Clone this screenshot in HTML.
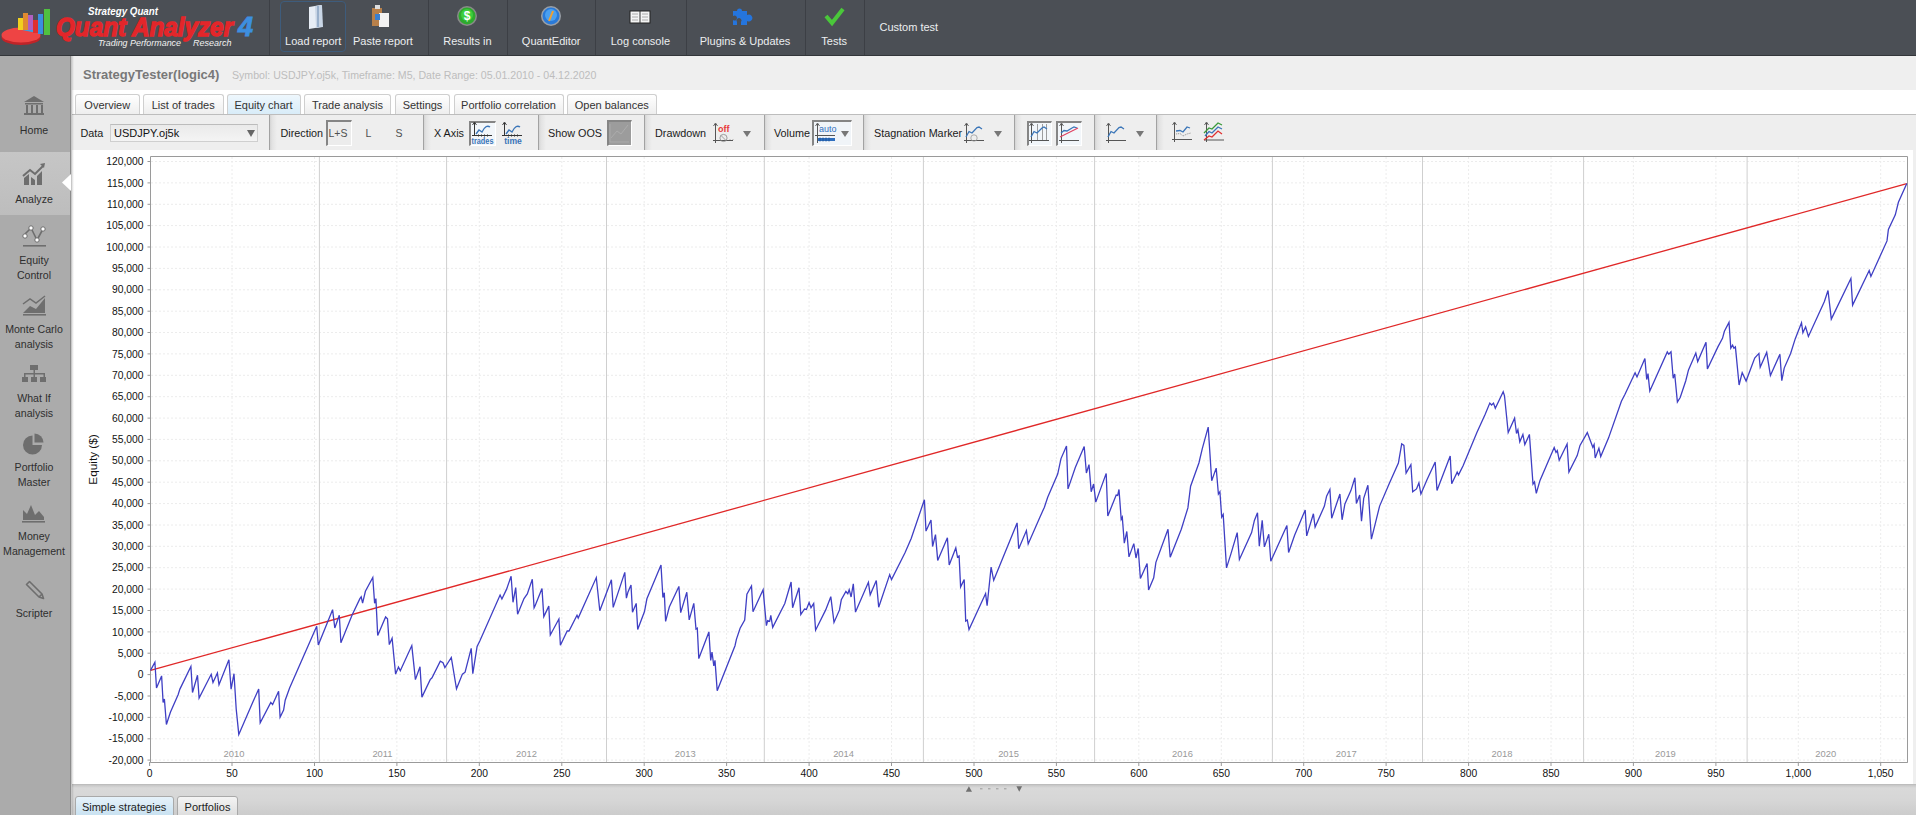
<!DOCTYPE html><html><head><meta charset="utf-8"><style>
*{margin:0;padding:0;box-sizing:border-box}
html,body{width:1916px;height:815px;overflow:hidden;background:#efefef;font-family:"Liberation Sans", sans-serif}
.abs{position:absolute}
#hdr{position:absolute;left:0;top:0;width:1916px;height:56px;background:#4b4f55;border-bottom:1px solid #33363a}
.hsep{position:absolute;top:0;width:1px;height:55px;background:#3c3f45}
.hlbl{position:absolute;top:34px;color:#eceef0;font-size:11px;white-space:nowrap;transform:translateX(-50%);line-height:14px}
#side{position:absolute;left:0;top:56px;width:71px;height:759px;background:#ababab;border-right:1.5px solid #8c8c8c}
#sshadow{position:absolute;left:71px;top:56px;width:3px;height:759px;background:linear-gradient(90deg,rgba(0,0,0,0.2),rgba(0,0,0,0));z-index:5}
.slbl{position:absolute;left:0;width:68px;text-align:center;color:#2e2e2e;font-size:10.6px;line-height:15px}
#title{position:absolute;left:83px;top:66.8px;font-size:13px;font-weight:bold;color:#787878;white-space:nowrap;line-height:16px}
#sub{position:absolute;left:232px;top:69px;font-size:10.6px;color:#bdbdbd;white-space:nowrap;line-height:12px}
#tabstrip{position:absolute;left:72px;top:90px;width:1844px;height:24px;background:#fff}
.tab{position:absolute;top:94px;height:20px;border:1px solid #cfcfcf;border-bottom:none;border-radius:3px 3px 0 0;background:linear-gradient(#ffffff,#eeeeee);font-size:11px;color:#333;line-height:21px;text-align:center;white-space:nowrap}
#tbar{position:absolute;left:72px;top:114px;width:1844px;height:36px;background:#eeeeee;border-top:1px solid #bdbdbd}
.tsep{position:absolute;top:115px;width:8px;height:35px;background:linear-gradient(90deg,#a2a2a2 0,#a2a2a2 1px,#d4d4d4 1px,#e2e2e2 3px,#eeeeee 8px)}
.tl{position:absolute;top:126px;font-size:10.8px;color:#1a1a1a;white-space:nowrap;line-height:14px}
#chart{position:absolute;left:72px;top:150px;width:1841px;height:634px;background:#fff}
#bbar{position:absolute;left:72px;top:783.5px;width:1844px;height:32px;background:linear-gradient(#c6c6c6 0,#d9d9d9 3px,#d6d6d6 50%,#cbcbcb 100%);border-top:1px solid #bdbdbd}
.btab{position:absolute;top:795.5px;height:22px;border:1px solid #a9a9a9;border-radius:3px 3px 0 0;font-size:11px;color:#222;line-height:20px;text-align:center;white-space:nowrap}
</style></head><body>
<div id="hdr"></div>
<svg class="abs" style="left:0;top:0" width="270" height="56" viewBox="0 0 270 56">
<ellipse cx="21" cy="37.5" rx="19.5" ry="7.5" fill="#c02428"/>
<ellipse cx="21" cy="35" rx="19.5" ry="7.5" fill="#ee4444"/><path d="M22 30 L40 29 L42 34 Z" fill="#3a9ee0"/><path d="M24 29 L38 28 L34 26 Z" fill="#50c040"/>
<rect x="18" y="18" width="5" height="12" fill="#f0d020"/>
<rect x="23" y="13" width="5" height="17" fill="#e08a30"/>
<rect x="28" y="15" width="5" height="15" fill="#b060c0"/>
<rect x="33" y="20" width="5" height="13" fill="#e03030"/>
<rect x="38" y="14" width="5" height="20" fill="#3a8ee0"/>
<rect x="44" y="9" width="6" height="26" fill="#50c040"/>
<text x="88" y="14.5" font-family="Liberation Sans" font-weight="bold" font-style="italic" font-size="10.5" fill="#ffffff" textLength="70" lengthAdjust="spacingAndGlyphs">Strategy Quant</text>
<text x="56" y="36" font-family="Liberation Sans" font-weight="bold" font-style="italic" font-size="25" fill="#e3262a" stroke="#e3262a" stroke-width="1.3" textLength="177" lengthAdjust="spacingAndGlyphs">Quant Analyzer</text>
<text x="238" y="35.5" font-family="Liberation Sans" font-weight="bold" font-style="italic" font-size="27" fill="#3d8fe0" stroke="#3d8fe0" stroke-width="0.8">4</text>
<text x="98" y="46" font-family="Liberation Sans" font-style="italic" font-size="9" fill="#f2f2f2" textLength="83" lengthAdjust="spacingAndGlyphs">Trading Performance</text>
<text x="193" y="46" font-family="Liberation Sans" font-style="italic" font-size="9" fill="#f2f2f2">Research</text>
</svg>
<div class="hsep" style="left:269.0px"></div>
<div class="hsep" style="left:428.0px"></div>
<div class="hsep" style="left:507.0px"></div>
<div class="hsep" style="left:595.0px"></div>
<div class="hsep" style="left:686.0px"></div>
<div class="hsep" style="left:805.0px"></div>
<div class="hsep" style="left:864.0px"></div>
<div class="abs" style="left:280px;top:1px;width:66px;height:51px;border:1px solid #3e5c7c;border-radius:4px;background:#474c53"></div>
<div class="hlbl" style="left:313.2px">Load report</div>
<div class="hlbl" style="left:382.9px">Paste report</div>
<div class="hlbl" style="left:467.4px">Results in</div>
<div class="hlbl" style="left:551.2px">QuantEditor</div>
<div class="hlbl" style="left:640.4px">Log console</div>
<div class="hlbl" style="left:745px">Plugins &amp; Updates</div>
<div class="hlbl" style="left:834.2px">Tests</div>
<div class="hlbl" style="left:908.8px;top:20px">Custom test</div>
<svg class="abs" style="left:280px;top:0" width="600" height="34" viewBox="280 0 600 34">
<path d="M309 7 L321 5 L321 27 L309 29 Z" fill="#e8eef6"/><path d="M315 6 L322 5 L323 27 L316 28 Z" fill="#c9d6e6"/><path d="M318 6 L318 27" stroke="#6a8ab0" stroke-width="1"/>
<rect x="372" y="8" width="10" height="18" fill="#b8804a"/><rect x="375" y="5" width="5" height="4" fill="#ddd"/><rect x="379" y="13" width="10" height="14" fill="#f2f2f2"/><rect x="375" y="14" width="5" height="6" fill="#3a7fd0"/>
<circle cx="467" cy="16" r="10" fill="#8a8a8a"/><circle cx="467" cy="16" r="8.5" fill="#2eaa2e"/><circle cx="467" cy="15" r="6" fill="#3ccf3c"/><text x="467" y="20" text-anchor="middle" font-family="Liberation Sans" font-weight="bold" font-size="12" fill="#fff">$</text>
<circle cx="551" cy="16" r="10" fill="#9aa0a8"/><circle cx="551" cy="16" r="8.5" fill="#2a7ad8"/><circle cx="551" cy="15" r="6" fill="#4aa0f0"/><path d="M549 21 L553 11" stroke="#f0a030" stroke-width="2"/>
<rect x="630" y="11" width="20" height="12" fill="#f4f4f4" stroke="#222" stroke-width="1"/><path d="M640 11 V23" stroke="#333"/><path d="M632 14h6M632 17h6M632 20h6M642 14h6M642 17h6M642 20h6" stroke="#999" stroke-width="0.8"/>
<path d="M733 11 h4 a2.5 2.5 0 1 1 5 0 h5 v4 a3.5 3.5 0 1 1 0 6 v4 h-6 v-3 a2.5 2.5 0 1 0 -4 0 v3 h-4 v-5 a2.5 2.5 0 1 0 0 -4 z" fill="#2575dd"/>
<path d="M826 16 L832 23 L843 9" stroke="#4ac73a" stroke-width="4" fill="none"/>
</svg>
<div id="side"></div>
<div class="abs" style="left:0;top:152px;width:69.5px;height:63px;background:linear-gradient(#c6c6c6,#bdbdbd)"></div>
<svg class="abs" style="left:62px;top:174px" width="9" height="17"><path d="M9 0 L0 8.5 L9 17 Z" fill="#ffffff"/></svg>
<div class="slbl" style="top:122.5px">Home</div>
<div class="slbl" style="top:191.5px">Analyze</div>
<div class="slbl" style="top:252.5px">Equity</div>
<div class="slbl" style="top:267.5px">Control</div>
<div class="slbl" style="top:321.5px">Monte Carlo</div>
<div class="slbl" style="top:336.5px">analysis</div>
<div class="slbl" style="top:390.5px">What If</div>
<div class="slbl" style="top:405.5px">analysis</div>
<div class="slbl" style="top:459.5px">Portfolio</div>
<div class="slbl" style="top:474.5px">Master</div>
<div class="slbl" style="top:528.5px">Money</div>
<div class="slbl" style="top:543.5px">Management</div>
<div class="slbl" style="top:605.5px">Scripter</div>
<svg class="abs" style="left:0;top:56px" width="68" height="560" viewBox="0 56 68 560">
<g fill="#6e6e6e" stroke="none">
<path d="M24 102 L34 96 L44 102 Z"/><rect x="25" y="103" width="18" height="1.5"/><rect x="26" y="105" width="2" height="8"/><rect x="31" y="105" width="2" height="8"/><rect x="36" y="105" width="2" height="8"/><rect x="41" y="105" width="2" height="8"/><rect x="24" y="113" width="20" height="2"/>
<path d="M24 185 L24 178 L29 174 L29 185 Z M31 185 L31 177 L35 180 L35 185 Z M37 185 L37 176 L42 171 L42 185 Z"/><path d="M23 176 L30 170 L35 174 L43 166" stroke="#6e6e6e" stroke-width="2" fill="none"/><path d="M40 164 L45 163 L44 168 Z"/>
<path d="M25 234 L31 228 L37 240 L43 229" stroke="#6e6e6e" stroke-width="1.6" fill="none"/><circle cx="25" cy="236" r="2.2" fill="#fff" stroke="#6e6e6e"/><circle cx="31" cy="228" r="2.2" fill="#fff" stroke="#6e6e6e"/><circle cx="37" cy="240" r="2.2" fill="#fff" stroke="#6e6e6e"/><circle cx="43" cy="229" r="2.2" fill="#fff" stroke="#6e6e6e"/><rect x="23" y="245" width="23" height="1.6"/>
<path d="M23 313 L30 306 L36 309 L45 298 L45 313 Z"/><path d="M23 304 L30 299 L36 303 L45 296" stroke="#6e6e6e" stroke-width="1.5" fill="none"/><rect x="23" y="314" width="23" height="1.6"/>
<rect x="30" y="365" width="8" height="5"/><rect x="33.5" y="370" width="1.5" height="4"/><rect x="24" y="373" width="21" height="1.5"/><rect x="24" y="373" width="1.5" height="4"/><rect x="33.5" y="373" width="1.5" height="4"/><rect x="43.5" y="373" width="1.5" height="4"/><rect x="22" y="377" width="6" height="5"/><rect x="31" y="377" width="6" height="5"/><rect x="40" y="377" width="6" height="5"/>
<path d="M32.5 435.5 A9.5 9.5 0 1 0 42 445 L32.5 445 Z"/><path d="M34.5 433.5 A9 9 0 0 1 43.5 442.5 L34.5 442.5 Z"/>
<path d="M23 520 L23 510 L27 514 L31 505 L35 515 L39 511 L44 517 L44 520 Z"/><rect x="22" y="521" width="23" height="1.6"/>
<path d="M29.5 581.5 L42 594 L43.5 598.5 L39 597 L26.5 584.5 Z M39 597 L42 594" fill="none" stroke="#6e6e6e" stroke-width="1.6" stroke-linejoin="round"/>
</g></svg>
<div id="title">StrategyTester(logic4)</div>
<div id="sub">Symbol: USDJPY.oj5k, Timeframe: M5, Date Range: 05.01.2010 - 04.12.2020</div>
<div id="tabstrip"></div>
<div class="tab" style="left:74.5px;width:65.5px;">Overview</div>
<div class="tab" style="left:142.5px;width:81.5px;">List of trades</div>
<div class="tab" style="left:226.5px;width:74.0px;background:linear-gradient(#eef7fd,#d8ecf8);">Equity chart</div>
<div class="tab" style="left:304px;width:87px;">Trade analysis</div>
<div class="tab" style="left:395px;width:55px;">Settings</div>
<div class="tab" style="left:453.5px;width:110.0px;">Portfolio correlation</div>
<div class="tab" style="left:567px;width:89.5px;">Open balances</div>
<div id="tbar"></div>
<div class="tsep" style="left:269px"></div>
<div class="tsep" style="left:423.2px"></div>
<div class="tsep" style="left:537.5px"></div>
<div class="tsep" style="left:644px"></div>
<div class="tsep" style="left:763.5px"></div>
<div class="tsep" style="left:863px"></div>
<div class="tsep" style="left:1014.3px"></div>
<div class="tsep" style="left:1094.2px"></div>
<div class="tsep" style="left:1156.2px"></div>
<div class="tl" style="left:80.5px">Data</div>
<div class="tl" style="left:280.5px">Direction</div>
<div class="tl" style="left:434px">X Axis</div>
<div class="tl" style="left:548px">Show OOS</div>
<div class="tl" style="left:655px">Drawdown</div>
<div class="tl" style="left:774px">Volume</div>
<div class="tl" style="left:874px">Stagnation Marker</div>
<div class="abs" style="left:110px;top:124px;width:148px;height:18px;border:1px solid #cfcfcf;border-top-color:#bcbcbc;background:linear-gradient(#eaeaea,#f4f4f4);font-size:11px;line-height:16px;padding-left:3px;color:#111">USDJPY.oj5k</div>
<div class="abs" style="left:247px;top:130px;width:0;height:0;border-left:4px solid transparent;border-right:4px solid transparent;border-top:7px solid #666"></div>
<div class="abs" style="left:325.6px;top:120.4px;width:26px;height:26px;border-top:2px solid #858585;border-left:2px solid #858585;border-right:1px solid #fff;border-bottom:1px solid #fff;background:#ececec"></div>
<div class="tl" style="left:328.5px;color:#505050;font-size:10.5px">L+S</div>
<div class="tl" style="left:365.5px;color:#505050;font-size:10.5px">L</div>
<div class="tl" style="left:395.5px;color:#505050;font-size:10.5px">S</div>
<div class="abs" style="left:469.4px;top:120.6px;width:26.5px;height:25px;border-top:2px solid #858585;border-left:2px solid #858585;border-right:1px solid #fff;border-bottom:1px solid #fff;background:#f2f6fa"></div>
<div class="abs" style="left:606.6px;top:120.2px;width:25.5px;height:25.5px;border-top:2px solid #858585;border-left:2px solid #858585;border-right:1px solid #fff;border-bottom:1px solid #fff;background:#9c9c9c"></div>
<div class="abs" style="left:811.8px;top:119.7px;width:40.5px;height:26.3px;border-top:2px solid #858585;border-left:2px solid #858585;border-right:1px solid #fff;border-bottom:1px solid #fff;background:#f0f4f8"></div>
<div class="abs" style="left:1026.6px;top:120.6px;width:25.8px;height:25px;border-top:2px solid #858585;border-left:2px solid #858585;border-right:1px solid #fff;border-bottom:1px solid #fff;background:#f2f6fa"></div>
<div class="abs" style="left:1056.2px;top:120.6px;width:26.3px;height:25px;border-top:2px solid #858585;border-left:2px solid #858585;border-right:1px solid #fff;border-bottom:1px solid #fff;background:#f2f6fa"></div>
<svg class="abs" style="left:460px;top:115px" width="800" height="35" viewBox="460 115 800 35">
<g fill="none" stroke-width="1.2">
<path d="M474.5 123 V136 M472 135.5 H492" stroke="#333" stroke-width="1"/><path d="M472.5 125 L474.5 122 L476.5 125" stroke="#333" stroke-width="0.9"/><path d="M476 134 L479 130 L482 132 Q486 124 490 127" stroke="#3a75b8" stroke-width="1.4"/><path d="M478 135.5h1M481 135.5h1M484 135.5h1M487 135.5h1" stroke="#333" stroke-width="2"/><text x="482.5" y="143.5" font-family="Liberation Sans" font-size="8.6" font-weight="bold" fill="#3a75b8" stroke="none" text-anchor="middle" textLength="22" lengthAdjust="spacingAndGlyphs">trades</text>
<path d="M504.5 123 V136 M502 135.5 H522" stroke="#333" stroke-width="1"/><path d="M502.5 125 L504.5 122 L506.5 125" stroke="#333" stroke-width="0.9"/><path d="M506 134 L509 130 L512 132 Q516 124 520 127" stroke="#3a75b8" stroke-width="1.4"/><path d="M508 135.5h1M511 135.5h1M514 135.5h1M517 135.5h1" stroke="#333" stroke-width="2"/><text x="513" y="143.5" font-family="Liberation Sans" font-size="8.6" font-weight="bold" fill="#3a75b8" stroke="none" text-anchor="middle">time</text>
<path d="M610 124 V142 H629 M611 138 L617 131 L621 134 L628 125" stroke="#b0b0b0" stroke-width="0.8"/>
<path d="M715.5 124 V143 M713 140.5 H733" stroke="#555" stroke-width="1"/><path d="M713.5 126 L715.5 123 L717.5 126" stroke="#555" stroke-width="0.9"/><text x="718" y="131.5" font-family="Liberation Sans" font-size="9" font-weight="bold" fill="#e83a3a" stroke="none">off</text><circle cx="723.5" cy="138" r="3.6" stroke="#888" stroke-width="0.8"/><path d="M721 135.5 L726 140.5" stroke="#888" stroke-width="0.8"/><path d="M730 139.5 L731.5 141 L733 139.5" stroke="#555" stroke-width="0.8"/>
<path d="M743 131 H751 L747 137 Z" fill="#777" stroke="none"/>
<path d="M817.5 124 V143 M815 135.5 H835" stroke="#555" stroke-width="1"/><path d="M815.5 126 L817.5 123 L819.5 126" stroke="#555" stroke-width="0.9"/><text x="819" y="131.5" font-family="Liberation Sans" font-size="9" fill="#2f6fbf" stroke="none">auto</text><path d="M818 139.5 H835" stroke="#2f6fbf" stroke-width="3"/><path d="M820 137.5v4M823 137.5v4M826 137.5v4M829 137.5v4" stroke="#1a4f8f" stroke-width="0.8"/>
<path d="M841 131 H849 L845 137 Z" fill="#777" stroke="none"/>
<path d="M966.5 124 V143 M964 140.5 H984" stroke="#555" stroke-width="1"/><path d="M964.5 126 L966.5 123 L968.5 126" stroke="#555" stroke-width="0.9"/><path d="M966 137 L969 131.5 L972 133 L977 127.5 L979 127 L982 129" stroke="#3a75b8" stroke-width="1.3"/><circle cx="974" cy="138" r="3.2" stroke="#999" stroke-width="0.8"/>
<path d="M994 131 H1002 L998 137 Z" fill="#777" stroke="none"/>
<path d="M1031.5 124 V143 M1029 140.5 H1049" stroke="#555" stroke-width="1"/><path d="M1029.5 126 L1031.5 123 L1033.5 126" stroke="#555" stroke-width="0.9"/><path d="M1037.5 124 V140 M1042.5 124 V140 M1046.5 124 V140" stroke="#777" stroke-width="0.7"/><path d="M1031 137 L1034 131.5 L1037 133 L1042 128 L1044 127 L1047 129" stroke="#3a75b8" stroke-width="1.3"/>
<path d="M1061.5 124 V143 M1059 140.5 H1079" stroke="#555" stroke-width="1"/><path d="M1059.5 126 L1061.5 123 L1063.5 126" stroke="#555" stroke-width="0.9"/><path d="M1061 133 L1064 130.5 L1067 131 L1072 128 L1074 127 L1077 128" stroke="#3a75b8" stroke-width="1.3"/><path d="M1060 137 L1078 128" stroke="#e04060" stroke-width="1.1"/>
<path d="M1108.5 124 V143 M1106 140.5 H1126" stroke="#555" stroke-width="1"/><path d="M1106.5 126 L1108.5 123 L1110.5 126" stroke="#555" stroke-width="0.9"/><path d="M1108 137 L1111 131.5 L1114 133 L1119 127.5 L1121 127 L1124 129" stroke="#3a75b8" stroke-width="1.3"/>
<path d="M1136 131 H1144 L1140 137 Z" fill="#777" stroke="none"/>
<path d="M1174.5 123 V142 M1172 139.5 H1192" stroke="#555" stroke-width="1"/><path d="M1172.5 125 L1174.5 122 L1176.5 125" stroke="#555" stroke-width="0.9"/><path d="M1176 131 L1180 130.5 L1183 132 L1187 127 L1190 128" stroke="#3a75b8" stroke-width="1.3"/><path d="M1176 134 L1180 133.5 L1183 136 L1187 134 L1191 133" stroke="#999" stroke-width="1" stroke-dasharray="1.2 0.8"/>
<path d="M1206.5 123 V142 M1204 140 H1224" stroke="#555" stroke-width="1"/><path d="M1204.5 125 L1206.5 122 L1208.5 125" stroke="#555" stroke-width="0.9"/><path d="M1204 133 L1209 128 L1212 129 L1218 123 L1222 125" stroke="#3a9a3a" stroke-width="1.3"/><path d="M1205 136 L1209 131.5 L1212 133 L1218 127 L1222 129" stroke="#3a75b8" stroke-width="1.3"/><path d="M1204 140 L1209 136 L1212 137 L1218 131 L1222 134" stroke="#e03030" stroke-width="1.3"/>
</g></svg>
<div id="chart"></div>
<svg class="abs" style="left:72px;top:150px" width="1841" height="634" viewBox="72 150 1841 634"><line x1="151" y1="161.5" x2="1907" y2="161.5" stroke="#ececec" stroke-width="1" stroke-dasharray="2 2"/><line x1="147.5" y1="161.5" x2="150.5" y2="161.5" stroke="#999"/><text x="143.5" y="165.1" text-anchor="end" font-family="Liberation Sans" font-size="10.3" fill="#111">120,000</text><line x1="151" y1="182.9" x2="1907" y2="182.9" stroke="#ececec" stroke-width="1" stroke-dasharray="2 2"/><line x1="147.5" y1="182.9" x2="150.5" y2="182.9" stroke="#999"/><text x="143.5" y="186.5" text-anchor="end" font-family="Liberation Sans" font-size="10.3" fill="#111">115,000</text><line x1="151" y1="204.3" x2="1907" y2="204.3" stroke="#ececec" stroke-width="1" stroke-dasharray="2 2"/><line x1="147.5" y1="204.3" x2="150.5" y2="204.3" stroke="#999"/><text x="143.5" y="207.9" text-anchor="end" font-family="Liberation Sans" font-size="10.3" fill="#111">110,000</text><line x1="151" y1="225.6" x2="1907" y2="225.6" stroke="#ececec" stroke-width="1" stroke-dasharray="2 2"/><line x1="147.5" y1="225.6" x2="150.5" y2="225.6" stroke="#999"/><text x="143.5" y="229.2" text-anchor="end" font-family="Liberation Sans" font-size="10.3" fill="#111">105,000</text><line x1="151" y1="247.0" x2="1907" y2="247.0" stroke="#ececec" stroke-width="1" stroke-dasharray="2 2"/><line x1="147.5" y1="247.0" x2="150.5" y2="247.0" stroke="#999"/><text x="143.5" y="250.6" text-anchor="end" font-family="Liberation Sans" font-size="10.3" fill="#111">100,000</text><line x1="151" y1="268.4" x2="1907" y2="268.4" stroke="#ececec" stroke-width="1" stroke-dasharray="2 2"/><line x1="147.5" y1="268.4" x2="150.5" y2="268.4" stroke="#999"/><text x="143.5" y="272.0" text-anchor="end" font-family="Liberation Sans" font-size="10.3" fill="#111">95,000</text><line x1="151" y1="289.8" x2="1907" y2="289.8" stroke="#ececec" stroke-width="1" stroke-dasharray="2 2"/><line x1="147.5" y1="289.8" x2="150.5" y2="289.8" stroke="#999"/><text x="143.5" y="293.4" text-anchor="end" font-family="Liberation Sans" font-size="10.3" fill="#111">90,000</text><line x1="151" y1="311.2" x2="1907" y2="311.2" stroke="#ececec" stroke-width="1" stroke-dasharray="2 2"/><line x1="147.5" y1="311.2" x2="150.5" y2="311.2" stroke="#999"/><text x="143.5" y="314.8" text-anchor="end" font-family="Liberation Sans" font-size="10.3" fill="#111">85,000</text><line x1="151" y1="332.5" x2="1907" y2="332.5" stroke="#ececec" stroke-width="1" stroke-dasharray="2 2"/><line x1="147.5" y1="332.5" x2="150.5" y2="332.5" stroke="#999"/><text x="143.5" y="336.1" text-anchor="end" font-family="Liberation Sans" font-size="10.3" fill="#111">80,000</text><line x1="151" y1="353.9" x2="1907" y2="353.9" stroke="#ececec" stroke-width="1" stroke-dasharray="2 2"/><line x1="147.5" y1="353.9" x2="150.5" y2="353.9" stroke="#999"/><text x="143.5" y="357.5" text-anchor="end" font-family="Liberation Sans" font-size="10.3" fill="#111">75,000</text><line x1="151" y1="375.3" x2="1907" y2="375.3" stroke="#ececec" stroke-width="1" stroke-dasharray="2 2"/><line x1="147.5" y1="375.3" x2="150.5" y2="375.3" stroke="#999"/><text x="143.5" y="378.9" text-anchor="end" font-family="Liberation Sans" font-size="10.3" fill="#111">70,000</text><line x1="151" y1="396.7" x2="1907" y2="396.7" stroke="#ececec" stroke-width="1" stroke-dasharray="2 2"/><line x1="147.5" y1="396.7" x2="150.5" y2="396.7" stroke="#999"/><text x="143.5" y="400.3" text-anchor="end" font-family="Liberation Sans" font-size="10.3" fill="#111">65,000</text><line x1="151" y1="418.1" x2="1907" y2="418.1" stroke="#ececec" stroke-width="1" stroke-dasharray="2 2"/><line x1="147.5" y1="418.1" x2="150.5" y2="418.1" stroke="#999"/><text x="143.5" y="421.7" text-anchor="end" font-family="Liberation Sans" font-size="10.3" fill="#111">60,000</text><line x1="151" y1="439.4" x2="1907" y2="439.4" stroke="#ececec" stroke-width="1" stroke-dasharray="2 2"/><line x1="147.5" y1="439.4" x2="150.5" y2="439.4" stroke="#999"/><text x="143.5" y="443.0" text-anchor="end" font-family="Liberation Sans" font-size="10.3" fill="#111">55,000</text><line x1="151" y1="460.8" x2="1907" y2="460.8" stroke="#ececec" stroke-width="1" stroke-dasharray="2 2"/><line x1="147.5" y1="460.8" x2="150.5" y2="460.8" stroke="#999"/><text x="143.5" y="464.4" text-anchor="end" font-family="Liberation Sans" font-size="10.3" fill="#111">50,000</text><line x1="151" y1="482.2" x2="1907" y2="482.2" stroke="#ececec" stroke-width="1" stroke-dasharray="2 2"/><line x1="147.5" y1="482.2" x2="150.5" y2="482.2" stroke="#999"/><text x="143.5" y="485.8" text-anchor="end" font-family="Liberation Sans" font-size="10.3" fill="#111">45,000</text><line x1="151" y1="503.6" x2="1907" y2="503.6" stroke="#ececec" stroke-width="1" stroke-dasharray="2 2"/><line x1="147.5" y1="503.6" x2="150.5" y2="503.6" stroke="#999"/><text x="143.5" y="507.2" text-anchor="end" font-family="Liberation Sans" font-size="10.3" fill="#111">40,000</text><line x1="151" y1="525.0" x2="1907" y2="525.0" stroke="#ececec" stroke-width="1" stroke-dasharray="2 2"/><line x1="147.5" y1="525.0" x2="150.5" y2="525.0" stroke="#999"/><text x="143.5" y="528.6" text-anchor="end" font-family="Liberation Sans" font-size="10.3" fill="#111">35,000</text><line x1="151" y1="546.3" x2="1907" y2="546.3" stroke="#ececec" stroke-width="1" stroke-dasharray="2 2"/><line x1="147.5" y1="546.3" x2="150.5" y2="546.3" stroke="#999"/><text x="143.5" y="549.9" text-anchor="end" font-family="Liberation Sans" font-size="10.3" fill="#111">30,000</text><line x1="151" y1="567.7" x2="1907" y2="567.7" stroke="#ececec" stroke-width="1" stroke-dasharray="2 2"/><line x1="147.5" y1="567.7" x2="150.5" y2="567.7" stroke="#999"/><text x="143.5" y="571.3" text-anchor="end" font-family="Liberation Sans" font-size="10.3" fill="#111">25,000</text><line x1="151" y1="589.1" x2="1907" y2="589.1" stroke="#ececec" stroke-width="1" stroke-dasharray="2 2"/><line x1="147.5" y1="589.1" x2="150.5" y2="589.1" stroke="#999"/><text x="143.5" y="592.7" text-anchor="end" font-family="Liberation Sans" font-size="10.3" fill="#111">20,000</text><line x1="151" y1="610.5" x2="1907" y2="610.5" stroke="#ececec" stroke-width="1" stroke-dasharray="2 2"/><line x1="147.5" y1="610.5" x2="150.5" y2="610.5" stroke="#999"/><text x="143.5" y="614.1" text-anchor="end" font-family="Liberation Sans" font-size="10.3" fill="#111">15,000</text><line x1="151" y1="631.9" x2="1907" y2="631.9" stroke="#ececec" stroke-width="1" stroke-dasharray="2 2"/><line x1="147.5" y1="631.9" x2="150.5" y2="631.9" stroke="#999"/><text x="143.5" y="635.5" text-anchor="end" font-family="Liberation Sans" font-size="10.3" fill="#111">10,000</text><line x1="151" y1="653.2" x2="1907" y2="653.2" stroke="#ececec" stroke-width="1" stroke-dasharray="2 2"/><line x1="147.5" y1="653.2" x2="150.5" y2="653.2" stroke="#999"/><text x="143.5" y="656.8" text-anchor="end" font-family="Liberation Sans" font-size="10.3" fill="#111">5,000</text><line x1="151" y1="674.6" x2="1907" y2="674.6" stroke="#ececec" stroke-width="1" stroke-dasharray="2 2"/><line x1="147.5" y1="674.6" x2="150.5" y2="674.6" stroke="#999"/><text x="143.5" y="678.2" text-anchor="end" font-family="Liberation Sans" font-size="10.3" fill="#111">0</text><line x1="151" y1="696.0" x2="1907" y2="696.0" stroke="#ececec" stroke-width="1" stroke-dasharray="2 2"/><line x1="147.5" y1="696.0" x2="150.5" y2="696.0" stroke="#999"/><text x="143.5" y="699.6" text-anchor="end" font-family="Liberation Sans" font-size="10.3" fill="#111">-5,000</text><line x1="151" y1="717.4" x2="1907" y2="717.4" stroke="#ececec" stroke-width="1" stroke-dasharray="2 2"/><line x1="147.5" y1="717.4" x2="150.5" y2="717.4" stroke="#999"/><text x="143.5" y="721.0" text-anchor="end" font-family="Liberation Sans" font-size="10.3" fill="#111">-10,000</text><line x1="151" y1="738.8" x2="1907" y2="738.8" stroke="#ececec" stroke-width="1" stroke-dasharray="2 2"/><line x1="147.5" y1="738.8" x2="150.5" y2="738.8" stroke="#999"/><text x="143.5" y="742.4" text-anchor="end" font-family="Liberation Sans" font-size="10.3" fill="#111">-15,000</text><line x1="151" y1="760.1" x2="1907" y2="760.1" stroke="#ececec" stroke-width="1" stroke-dasharray="2 2"/><line x1="147.5" y1="760.1" x2="150.5" y2="760.1" stroke="#999"/><text x="143.5" y="763.7" text-anchor="end" font-family="Liberation Sans" font-size="10.3" fill="#111">-20,000</text><line x1="149.6" y1="762" x2="149.6" y2="766" stroke="#999"/><text x="149.6" y="776.5" text-anchor="middle" font-family="Liberation Sans" font-size="10.3" fill="#111">0</text><line x1="232.0" y1="157" x2="232.0" y2="762" stroke="#ececec" stroke-width="1" stroke-dasharray="2 2"/><line x1="232.0" y1="762" x2="232.0" y2="766" stroke="#999"/><text x="232.0" y="776.5" text-anchor="middle" font-family="Liberation Sans" font-size="10.3" fill="#111">50</text><line x1="314.5" y1="157" x2="314.5" y2="762" stroke="#ececec" stroke-width="1" stroke-dasharray="2 2"/><line x1="314.5" y1="762" x2="314.5" y2="766" stroke="#999"/><text x="314.5" y="776.5" text-anchor="middle" font-family="Liberation Sans" font-size="10.3" fill="#111">100</text><line x1="396.9" y1="157" x2="396.9" y2="762" stroke="#ececec" stroke-width="1" stroke-dasharray="2 2"/><line x1="396.9" y1="762" x2="396.9" y2="766" stroke="#999"/><text x="396.9" y="776.5" text-anchor="middle" font-family="Liberation Sans" font-size="10.3" fill="#111">150</text><line x1="479.3" y1="157" x2="479.3" y2="762" stroke="#ececec" stroke-width="1" stroke-dasharray="2 2"/><line x1="479.3" y1="762" x2="479.3" y2="766" stroke="#999"/><text x="479.3" y="776.5" text-anchor="middle" font-family="Liberation Sans" font-size="10.3" fill="#111">200</text><line x1="561.8" y1="157" x2="561.8" y2="762" stroke="#ececec" stroke-width="1" stroke-dasharray="2 2"/><line x1="561.8" y1="762" x2="561.8" y2="766" stroke="#999"/><text x="561.8" y="776.5" text-anchor="middle" font-family="Liberation Sans" font-size="10.3" fill="#111">250</text><line x1="644.2" y1="157" x2="644.2" y2="762" stroke="#ececec" stroke-width="1" stroke-dasharray="2 2"/><line x1="644.2" y1="762" x2="644.2" y2="766" stroke="#999"/><text x="644.2" y="776.5" text-anchor="middle" font-family="Liberation Sans" font-size="10.3" fill="#111">300</text><line x1="726.6" y1="157" x2="726.6" y2="762" stroke="#ececec" stroke-width="1" stroke-dasharray="2 2"/><line x1="726.6" y1="762" x2="726.6" y2="766" stroke="#999"/><text x="726.6" y="776.5" text-anchor="middle" font-family="Liberation Sans" font-size="10.3" fill="#111">350</text><line x1="809.1" y1="157" x2="809.1" y2="762" stroke="#ececec" stroke-width="1" stroke-dasharray="2 2"/><line x1="809.1" y1="762" x2="809.1" y2="766" stroke="#999"/><text x="809.1" y="776.5" text-anchor="middle" font-family="Liberation Sans" font-size="10.3" fill="#111">400</text><line x1="891.5" y1="157" x2="891.5" y2="762" stroke="#ececec" stroke-width="1" stroke-dasharray="2 2"/><line x1="891.5" y1="762" x2="891.5" y2="766" stroke="#999"/><text x="891.5" y="776.5" text-anchor="middle" font-family="Liberation Sans" font-size="10.3" fill="#111">450</text><line x1="974.0" y1="157" x2="974.0" y2="762" stroke="#ececec" stroke-width="1" stroke-dasharray="2 2"/><line x1="974.0" y1="762" x2="974.0" y2="766" stroke="#999"/><text x="974.0" y="776.5" text-anchor="middle" font-family="Liberation Sans" font-size="10.3" fill="#111">500</text><line x1="1056.4" y1="157" x2="1056.4" y2="762" stroke="#ececec" stroke-width="1" stroke-dasharray="2 2"/><line x1="1056.4" y1="762" x2="1056.4" y2="766" stroke="#999"/><text x="1056.4" y="776.5" text-anchor="middle" font-family="Liberation Sans" font-size="10.3" fill="#111">550</text><line x1="1138.8" y1="157" x2="1138.8" y2="762" stroke="#ececec" stroke-width="1" stroke-dasharray="2 2"/><line x1="1138.8" y1="762" x2="1138.8" y2="766" stroke="#999"/><text x="1138.8" y="776.5" text-anchor="middle" font-family="Liberation Sans" font-size="10.3" fill="#111">600</text><line x1="1221.3" y1="157" x2="1221.3" y2="762" stroke="#ececec" stroke-width="1" stroke-dasharray="2 2"/><line x1="1221.3" y1="762" x2="1221.3" y2="766" stroke="#999"/><text x="1221.3" y="776.5" text-anchor="middle" font-family="Liberation Sans" font-size="10.3" fill="#111">650</text><line x1="1303.7" y1="157" x2="1303.7" y2="762" stroke="#ececec" stroke-width="1" stroke-dasharray="2 2"/><line x1="1303.7" y1="762" x2="1303.7" y2="766" stroke="#999"/><text x="1303.7" y="776.5" text-anchor="middle" font-family="Liberation Sans" font-size="10.3" fill="#111">700</text><line x1="1386.1" y1="157" x2="1386.1" y2="762" stroke="#ececec" stroke-width="1" stroke-dasharray="2 2"/><line x1="1386.1" y1="762" x2="1386.1" y2="766" stroke="#999"/><text x="1386.1" y="776.5" text-anchor="middle" font-family="Liberation Sans" font-size="10.3" fill="#111">750</text><line x1="1468.6" y1="157" x2="1468.6" y2="762" stroke="#ececec" stroke-width="1" stroke-dasharray="2 2"/><line x1="1468.6" y1="762" x2="1468.6" y2="766" stroke="#999"/><text x="1468.6" y="776.5" text-anchor="middle" font-family="Liberation Sans" font-size="10.3" fill="#111">800</text><line x1="1551.0" y1="157" x2="1551.0" y2="762" stroke="#ececec" stroke-width="1" stroke-dasharray="2 2"/><line x1="1551.0" y1="762" x2="1551.0" y2="766" stroke="#999"/><text x="1551.0" y="776.5" text-anchor="middle" font-family="Liberation Sans" font-size="10.3" fill="#111">850</text><line x1="1633.4" y1="157" x2="1633.4" y2="762" stroke="#ececec" stroke-width="1" stroke-dasharray="2 2"/><line x1="1633.4" y1="762" x2="1633.4" y2="766" stroke="#999"/><text x="1633.4" y="776.5" text-anchor="middle" font-family="Liberation Sans" font-size="10.3" fill="#111">900</text><line x1="1715.9" y1="157" x2="1715.9" y2="762" stroke="#ececec" stroke-width="1" stroke-dasharray="2 2"/><line x1="1715.9" y1="762" x2="1715.9" y2="766" stroke="#999"/><text x="1715.9" y="776.5" text-anchor="middle" font-family="Liberation Sans" font-size="10.3" fill="#111">950</text><line x1="1798.3" y1="157" x2="1798.3" y2="762" stroke="#ececec" stroke-width="1" stroke-dasharray="2 2"/><line x1="1798.3" y1="762" x2="1798.3" y2="766" stroke="#999"/><text x="1798.3" y="776.5" text-anchor="middle" font-family="Liberation Sans" font-size="10.3" fill="#111">1,000</text><line x1="1880.7" y1="157" x2="1880.7" y2="762" stroke="#ececec" stroke-width="1" stroke-dasharray="2 2"/><line x1="1880.7" y1="762" x2="1880.7" y2="766" stroke="#999"/><text x="1880.7" y="776.5" text-anchor="middle" font-family="Liberation Sans" font-size="10.3" fill="#111">1,050</text><line x1="319.4" y1="157" x2="319.4" y2="762" stroke="#cfcfcf" stroke-width="1"/><line x1="446.6" y1="157" x2="446.6" y2="762" stroke="#cfcfcf" stroke-width="1"/><line x1="606.5" y1="157" x2="606.5" y2="762" stroke="#cfcfcf" stroke-width="1"/><line x1="764.3" y1="157" x2="764.3" y2="762" stroke="#cfcfcf" stroke-width="1"/><line x1="923.4" y1="157" x2="923.4" y2="762" stroke="#cfcfcf" stroke-width="1"/><line x1="1094.6" y1="157" x2="1094.6" y2="762" stroke="#cfcfcf" stroke-width="1"/><line x1="1272.4" y1="157" x2="1272.4" y2="762" stroke="#cfcfcf" stroke-width="1"/><line x1="1422.5" y1="157" x2="1422.5" y2="762" stroke="#cfcfcf" stroke-width="1"/><line x1="1583.6" y1="157" x2="1583.6" y2="762" stroke="#cfcfcf" stroke-width="1"/><line x1="1747.1" y1="157" x2="1747.1" y2="762" stroke="#cfcfcf" stroke-width="1"/><text x="234" y="756.8" text-anchor="middle" font-family="Liberation Sans" font-size="9.4" fill="#999999">2010</text><text x="382.5" y="756.8" text-anchor="middle" font-family="Liberation Sans" font-size="9.4" fill="#999999">2011</text><text x="526.5" y="756.8" text-anchor="middle" font-family="Liberation Sans" font-size="9.4" fill="#999999">2012</text><text x="685.2" y="756.8" text-anchor="middle" font-family="Liberation Sans" font-size="9.4" fill="#999999">2013</text><text x="843.6" y="756.8" text-anchor="middle" font-family="Liberation Sans" font-size="9.4" fill="#999999">2014</text><text x="1008.6" y="756.8" text-anchor="middle" font-family="Liberation Sans" font-size="9.4" fill="#999999">2015</text><text x="1182.5" y="756.8" text-anchor="middle" font-family="Liberation Sans" font-size="9.4" fill="#999999">2016</text><text x="1346.3" y="756.8" text-anchor="middle" font-family="Liberation Sans" font-size="9.4" fill="#999999">2017</text><text x="1502" y="756.8" text-anchor="middle" font-family="Liberation Sans" font-size="9.4" fill="#999999">2018</text><text x="1665.4" y="756.8" text-anchor="middle" font-family="Liberation Sans" font-size="9.4" fill="#999999">2019</text><text x="1825.7" y="756.8" text-anchor="middle" font-family="Liberation Sans" font-size="9.4" fill="#999999">2020</text><path d="M150.5 762.5 V156.5 H1907.5 V762.5 Z" fill="none" stroke="#9a9a9a" stroke-width="1"/><line x1="150.5" y1="762.5" x2="1907.5" y2="762.5" stroke="#9a9a9a" stroke-width="1"/><line x1="150.5" y1="670.4" x2="1906.8" y2="183.6" stroke="#e02828" stroke-width="1.3"/><polyline points="150.5,670.4 154.9,662.2 156.5,688.0 161.6,675.9 163.1,702.4 164.4,699.0 166.4,724.5 170.4,712.3 178.1,694.7 179.9,689.1 190.9,666.4 192.5,692.5 197.5,675.2 199.1,698.0 211.2,674.3 213.0,682.5 217.4,673.0 219.0,684.7 228.9,659.8 231.1,689.1 234.0,673.7 236.2,709.0 238.8,734.4 253.2,701.3 258.7,689.1 260.2,722.9 270.8,702.4 272.6,704.6 278.6,691.3 280.1,717.2 283.6,710.1 285.2,700.2 289.6,688.0 316.7,626.2 318.3,645.0 332.6,609.7 334.8,628.0 339.3,615.2 340.9,642.8 352.0,615.2 359.9,598.6 361.2,596.8 362.6,603.2 365.4,591.3 372.8,577.5 374.6,603.2 375.9,598.6 377.7,635.4 385.6,617.0 387.5,618.9 389.3,644.6 392.1,638.2 395.6,674.1 398.5,667.1 400.3,670.8 411.8,645.6 415.4,679.6 420.0,666.7 421.9,697.1 430.2,679.6 432.0,677.8 440.3,661.2 443.0,662.7 444.9,667.6 451.3,657.5 456.5,688.8 462.4,674.1 465.1,672.2 471.2,648.3 472.8,673.7 477.1,646.5 479.8,641.0 500.1,595.0 501.9,599.0 506.5,589.4 511.1,576.2 513.0,602.3 515.7,587.6 517.6,614.3 524.0,598.6 527.3,594.0 532.3,579.3 534.1,607.8 535.0,606.1 542.0,588.6 543.8,616.6 548.8,606.1 550.3,635.0 558.9,619.0 560.4,645.3 567.2,631.0 569.0,631.0 577.0,615.3 578.2,618.1 596.3,577.6 599.8,610.7 611.4,579.8 613.2,607.4 624.8,572.4 626.4,598.2 627.9,592.3 631.0,585.0 632.5,612.2 636.2,603.4 637.7,629.5 644.5,611.6 646.9,598.8 661.0,565.1 662.9,597.5 664.3,592.7 665.6,621.4 669.3,607.0 678.9,586.4 680.7,612.6 686.8,592.3 689.2,619.9 693.8,603.4 696.0,629.1 697.3,628.2 698.8,658.6 708.9,631.9 710.7,660.4 712.0,652.1 713.8,665.9 715.0,660.4 717.2,690.8 735.0,645.7 736.4,639.4 740.1,628.3 744.7,620.0 746.9,594.3 751.5,586.0 753.0,611.8 763.1,589.7 766.4,625.6 767.7,620.6 769.6,621.3 770.8,615.4 772.7,627.4 784.8,603.5 791.1,582.0 792.6,607.7 799.0,587.8 800.8,614.5 804.5,609.0 806.4,609.5 809.1,602.6 811.0,607.7 813.7,603.5 815.6,630.2 825.7,609.9 830.8,596.7 834.0,622.4 839.5,609.9 841.3,599.8 845.9,591.5 847.8,593.7 849.2,589.7 851.1,597.0 853.3,583.8 855.5,612.1 868.4,582.3 870.2,594.8 876.3,580.5 878.7,607.2 889.7,574.6 891.5,579.6 905.0,552.7 911.2,538.4 924.4,499.7 926.0,531.1 931.0,520.0 932.6,546.5 935.5,534.6 937.7,560.4 947.4,537.7 949.2,564.9 955.8,547.9 957.5,557.1 959.1,556.0 960.6,586.9 964.2,579.6 965.7,621.1 967.3,620.0 969.0,629.5 985.6,593.6 987.1,605.7 991.1,567.1 993.7,580.3 1017.1,522.9 1018.7,548.7 1026.4,530.6 1028.2,543.9 1040.0,517.1 1044.4,507.2 1047.7,497.3 1057.7,474.1 1061.0,458.6 1066.5,446.0 1068.0,488.9 1075.3,467.5 1084.2,446.5 1086.4,473.0 1089.0,464.6 1091.2,491.7 1093.6,484.0 1095.8,502.1 1106.2,473.4 1107.8,516.0 1116.2,495.1 1117.7,495.5 1119.0,489.5 1121.2,519.3 1122.3,517.1 1124.3,543.2 1126.8,531.5 1129.0,556.9 1133.8,543.6 1136.0,558.0 1138.2,548.5 1140.4,578.5 1147.1,563.5 1148.6,590.0 1153.7,577.8 1155.9,562.4 1168.0,529.3 1170.2,557.3 1181.3,529.3 1187.9,507.9 1190.6,486.2 1198.9,463.0 1202.3,448.7 1208.2,427.1 1211.7,480.7 1216.2,468.1 1218.4,494.0 1219.9,491.7 1221.7,517.1 1223.2,514.5 1226.5,567.9 1231.0,553.6 1237.2,532.6 1239.4,559.5 1251.6,532.6 1254.4,520.4 1257.5,512.7 1259.3,546.3 1262.2,520.4 1264.4,546.9 1268.8,534.3 1270.8,561.3 1286.9,525.5 1288.6,552.5 1294.6,535.2 1305.2,510.1 1306.7,535.9 1313.4,513.8 1315.1,527.1 1324.4,506.1 1326.6,496.2 1329.9,489.5 1331.7,518.2 1339.9,494.0 1342.1,519.8 1344.9,503.9 1350.9,490.6 1354.9,477.8 1356.4,503.4 1359.7,495.1 1361.5,521.1 1363.7,498.4 1367.9,485.3 1371.4,539.2 1375.2,523.8 1379.6,506.1 1389.5,482.9 1398.4,463.0 1401.7,443.8 1403.9,445.4 1406.1,473.0 1410.9,464.6 1412.7,491.7 1416.5,488.9 1418.9,482.9 1420.9,494.0 1427.1,479.6 1435.2,462.0 1437.0,490.5 1450.2,456.1 1451.7,483.7 1457.2,472.1 1458.5,474.9 1463.1,465.7 1476.9,432.6 1485.2,414.2 1489.8,403.1 1491.6,405.0 1493.5,403.1 1495.3,408.3 1503.2,391.7 1504.5,395.8 1508.2,432.6 1514.6,418.2 1516.5,433.5 1517.9,429.8 1519.8,441.8 1522.9,434.4 1524.8,444.5 1529.4,434.4 1533.0,484.1 1534.5,481.9 1536.3,493.3 1540.0,480.4 1554.2,447.6 1556.0,452.4 1557.3,450.6 1559.2,460.2 1567.1,444.0 1568.9,472.1 1577.2,455.6 1580.0,445.4 1587.3,432.6 1592.8,447.3 1594.1,444.5 1595.2,458.0 1598.9,448.2 1600.7,456.5 1608.5,438.1 1621.4,401.3 1625.0,394.2 1635.1,372.7 1637.0,376.9 1644.9,358.5 1646.7,379.5 1648.0,373.6 1649.8,391.1 1667.3,351.9 1668.8,354.3 1671.0,351.9 1673.2,378.2 1674.7,374.0 1677.4,402.1 1680.2,397.5 1685.7,381.0 1688.5,369.9 1695.8,353.0 1697.7,361.6 1706.0,342.3 1707.4,369.0 1717.9,346.9 1722.5,338.3 1724.4,331.3 1729.0,322.4 1730.8,348.2 1732.6,345.1 1733.9,348.2 1735.4,346.9 1739.1,385.0 1742.2,372.7 1746.1,381.0 1754.7,358.0 1758.9,353.4 1760.2,367.2 1766.7,352.4 1770.4,375.4 1779.9,354.3 1781.8,380.6 1784.2,368.1 1790.6,353.4 1795.2,338.9 1801.5,322.7 1802.9,332.7 1805.6,326.8 1808.4,336.4 1824.4,301.4 1828.0,290.5 1831.3,319.1 1850.9,278.4 1852.6,305.1 1869.2,270.5 1870.9,276.4 1887.0,240.9 1888.4,229.4 1895.3,214.8 1898.4,202.3 1906.8,183.6" fill="none" stroke="#3f3fc4" stroke-width="1.3" stroke-linejoin="miter"/><text x="0" y="0" transform="translate(97,459.5) rotate(-90)" text-anchor="middle" font-family="Liberation Sans" font-size="11.8" fill="#111">Equity ($)</text></svg>
<div id="bbar"></div>
<div id="sshadow"></div>
<svg class="abs" style="left:960px;top:784px" width="70" height="10"><path d="M5.8 7.8 L8.9 2.2 L12 7.8 Z" fill="#707070"/><path d="M20 4.8h2.5M28 4.8h2.5M36 4.8h2.5M44 4.8h2.5" stroke="#9a9a9a" stroke-width="1"/><path d="M56.4 2.2 L62.1 2.2 L59.25 7.8 Z" fill="#707070"/></svg>
<div class="btab" style="left:74.6px;width:99px;background:linear-gradient(#e6f2fa,#c6e0f0)">Simple strategies</div>
<div class="btab" style="left:177px;width:61px;background:linear-gradient(#f4f4f4,#dcdcdc)">Portfolios</div>
</body></html>
